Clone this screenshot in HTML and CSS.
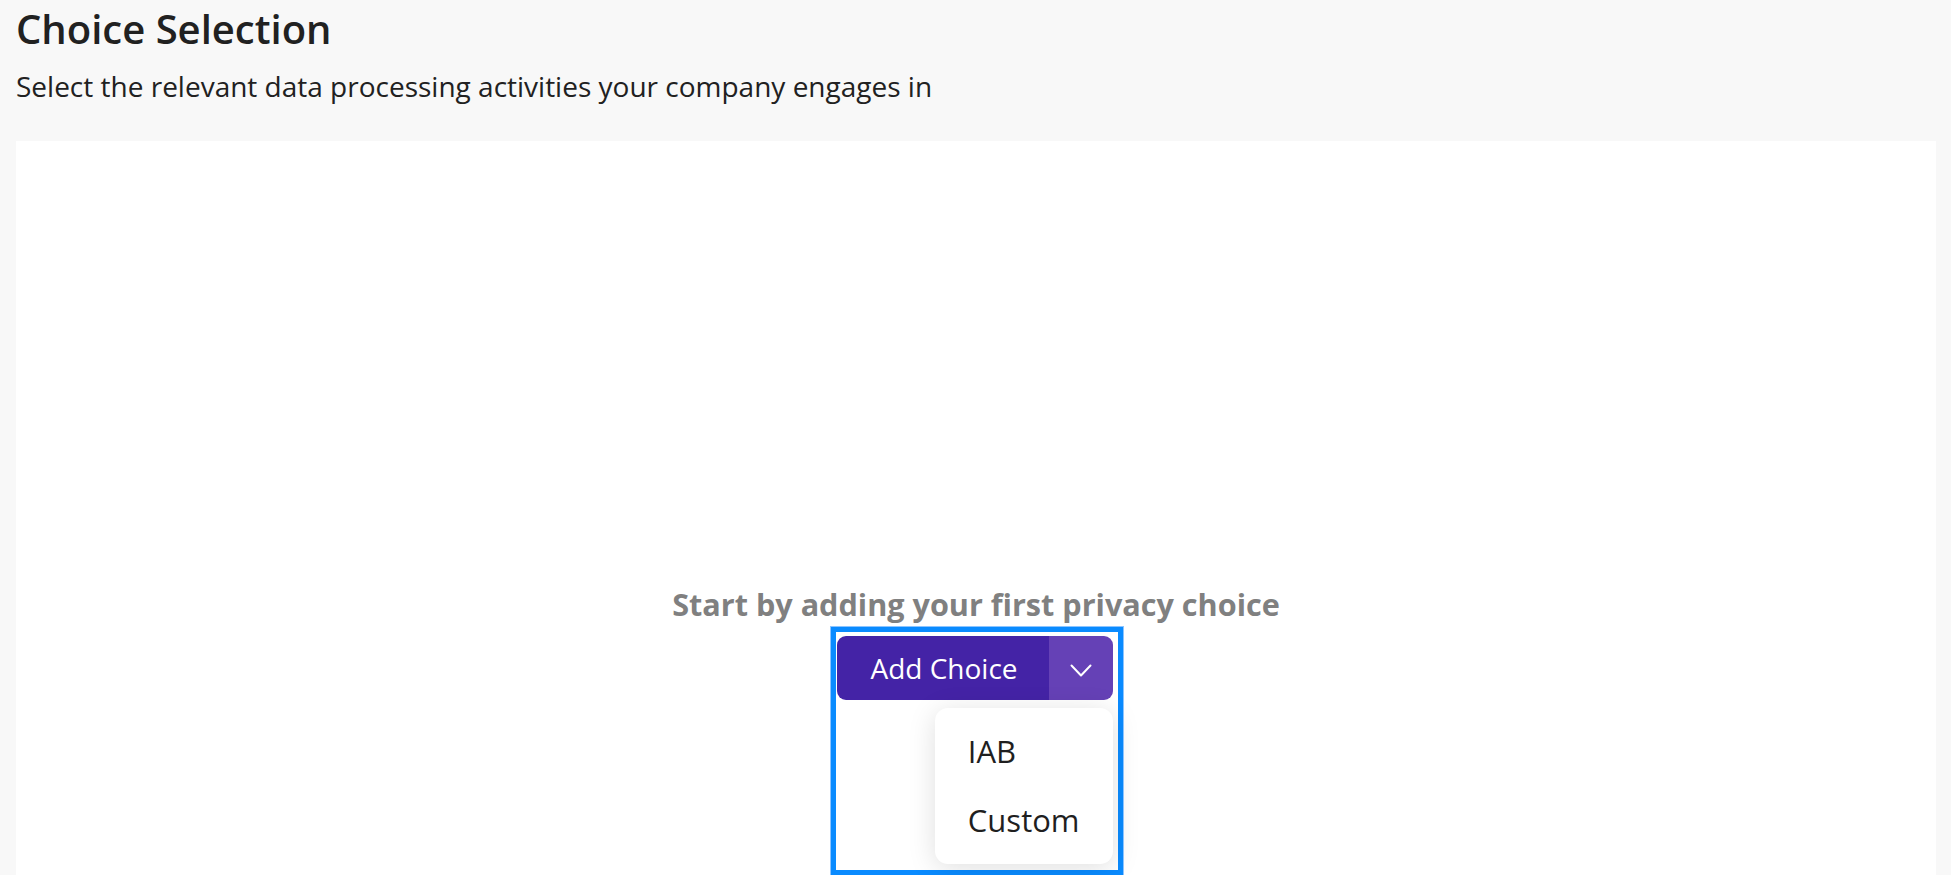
FILE: index.html
```html
<!DOCTYPE html>
<html lang="en">
<head>
  <meta charset="UTF-8">
  <meta name="viewport" content="width=device-width, initial-scale=1.0">
  <title>Choice Selection</title>
  <link rel="stylesheet" href="styles.css">
</head>
<body>
  <header class="page-head">
    <h1>Choice Selection</h1>
    <p>Select the relevant data processing activities your company engages in</p>
  </header>
  <main class="card">
    <div class="empty">
      <h2>Start by adding your first privacy choice</h2>
      <div class="highlight">
        <div class="split-btn">
          <button class="main-btn" type="button">Add Choice</button>
          <button class="caret-btn" type="button" aria-label="More options">
            <svg width="22" height="13" viewBox="0 0 22 13" fill="none" stroke="#fff" stroke-width="2" stroke-linecap="round" stroke-linejoin="round">
              <path d="M1.5 1.5 L11 11.5 L20.5 1.5"/>
            </svg>
          </button>
        </div>
        <ul class="menu">
          <li>IAB</li>
          <li>Custom</li>
        </ul>
      </div>
    </div>
  </main>
</body>
</html>
```

FILE: styles.css
```css
* { box-sizing: border-box; margin: 0; padding: 0; }
body { font-family: "Open Sans", "Noto Sans", sans-serif; background: #f8f8f8; color: #212121; overflow: hidden; }
.page-head { padding: 1px 16px 0; }
.page-head h1 { font-size: 40px; font-weight: 600; }
.page-head p { font-size: 28px; margin-top: 11px; }
.card { background: #fff; margin: 36px 15px 0 16px; min-height: 900px; }
.empty { display: flex; flex-direction: column; align-items: center; padding-top: 442px; }
.empty h2 { font-size: 30.6px; font-weight: 700; color: #808080; }
.highlight { display: flex; flex-direction: column; align-items: flex-end; margin: 2px 0 0 2px; padding: 4px 5px 0 1px; border: 5px solid #0a8bff; outline: 1px solid #8cc4ff; height: 248px; }
.split-btn { display: flex; height: 64px; border-radius: 9px; overflow: hidden; }
.split-btn button { border: none; color: #fff; font-family: inherit; cursor: pointer; }
.main-btn { background: #4423a6; font-size: 28px; padding: 0 31px 0 33px; }
.caret-btn { background: #6541b6; width: 64px; display: flex; align-items: center; justify-content: center; padding-top: 4px; }
.menu { list-style: none; background: #fff; margin-top: 8px; padding: 9px 33px; border-radius: 13px; box-shadow: 0 4px 28px rgba(0,0,0,0.13); }
.menu li { font-size: 31px; line-height: 69px; color: #1f1f1f; }
```
